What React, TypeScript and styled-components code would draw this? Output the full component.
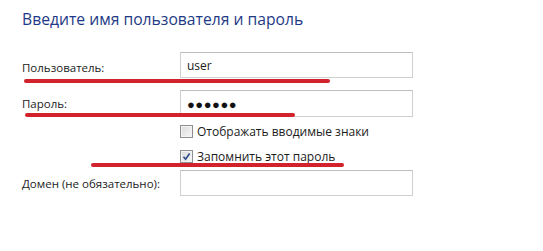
import styled, { createGlobalStyle } from 'styled-components';

const GlobalStyle = createGlobalStyle`
	body {
		margin: 0;
		background: #ffffff;
		font-family: 'Open Sans', 'Noto Sans', sans-serif;
	}
`;

const Page = styled.div`
	position: relative;
	width: 543px;
	height: 251px;
	background: #ffffff;
	overflow: hidden;
`;

const Title = styled.h1`
	margin: 0;
	padding: 9px 0 0 22px;
	font-size: 15.7px;
	line-height: 21px;
	font-weight: 400;
	color: #1e3a86;
`;

const Form = styled.div`
	display: flex;
	flex-direction: column;
	margin-top: 22px;
`;

const Row = styled.div<{ $top: number; $height: number }>`
	display: grid;
	grid-template-columns: 180px 233px;
	align-items: center;
	margin-top: ${(p) => p.$top}px;
	height: ${(p) => p.$height}px;
`;

const Label = styled.label<{ $shift?: number }>`
	padding-left: 22px;
	padding-top: ${(p) => p.$shift || 0}px;
	font-size: 11.5px;
	color: #1b1b1b;
`;

const Field = styled.div`
	box-sizing: border-box;
	height: 100%;
	border: 1px solid #cfcfcf;
	border-top-color: #bdbdbd;
	display: flex;
	align-items: center;
	padding-left: 6px;
	font-size: 12px;
	color: #1b1b1b;
`;

const Dots = styled.span`
	font-size: 13px;
	letter-spacing: 0.5px;
	color: #111;
`;

const CheckLine = styled.div`
	grid-column: 2;
	display: flex;
	align-items: center;
	gap: 4px;
	height: 13px;
	line-height: 13px;
	font-size: 12px;
	color: #1b1b1b;
`;

const Box = styled.span`
	box-sizing: border-box;
	flex: none;
	width: 13px;
	height: 13px;
	border: 1px solid #8e8f8f;
	background: linear-gradient(135deg, #dcdcdc, #f6f6f6);
	box-shadow: inset 0 0 0 1px #f4f4f4;
	display: flex;
	align-items: center;
	justify-content: center;
`;

const Marker = styled.div<{ $x: number; $y: number; $w: number }>`
	position: absolute;
	left: ${(p) => p.$x}px;
	top: ${(p) => p.$y}px;
	width: ${(p) => p.$w}px;
	height: 4px;
	border-radius: 2px;
	background: #d2232c;
`;

const Check = ({ checked, text }: { checked?: boolean; text: string }) => (
	<CheckLine>
		<Box>
			{checked && (
				<svg width="9" height="9" viewBox="0 0 9 9">
					<path d="M1.5 4.8 L3.6 7.2 L7.6 1.5" fill="none" stroke="#2c4a8c" strokeWidth="1.6" />
				</svg>
			)}
		</Box>
		{text}
	</CheckLine>
);

const App = () => {
	return (
		<>
			<GlobalStyle />
			<Page>
				<Title>Введите имя пользователя и пароль</Title>
				<Form>
					<Row $top={0} $height={26}>
						<Label $shift={5}>Пользователь:</Label>
						<Field>user</Field>
					</Row>
					<Row $top={12} $height={27}>
						<Label>Пароль:</Label>
						<Field>
							<Dots>●●●●●●</Dots>
						</Field>
					</Row>
					<Row $top={8} $height={13}>
						<Check text="Отображать вводимые знаки" />
					</Row>
					<Row $top={12} $height={13}>
						<Check checked text="Запомнить этот пароль" />
					</Row>
					<Row $top={7} $height={26}>
						<Label>Домен (не обязательно):</Label>
						<Field />
					</Row>
				</Form>
				<Marker $x={24} $y={79} $w={306} />
				<Marker $x={25} $y={113} $w={270} />
				<Marker $x={91} $y={163} $w={253} />
			</Page>
		</>
	);
};

export default App;
